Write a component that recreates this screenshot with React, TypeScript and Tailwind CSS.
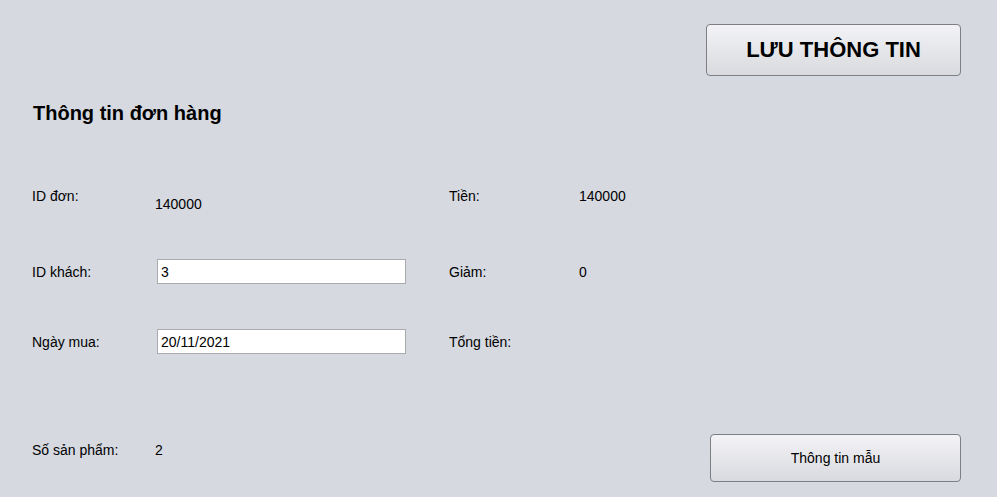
import React from "react";

export default function App() {
  return (
    <div className="w-[997px] h-[497px] bg-[#d6d9e0] font-['Liberation_Sans',Arial,sans-serif] text-[14px] leading-[16px] text-black flex flex-col overflow-hidden">
      <div className="flex justify-end pt-[24px] pr-[36px]">
        <button className="w-[255px] h-[52px] rounded-[4px] border border-[#7d7f84] bg-gradient-to-b from-[#f3f3f6] to-[#d9dadf] text-[22px] font-bold leading-none text-black">
          LƯU THÔNG TIN
        </button>
      </div>
      <h1 className="ml-[33px] mt-[26px] text-[20px] font-bold leading-[22px]">Thông tin đơn hàng</h1>

      <div className="mt-[64px] pl-[32px] grid grid-cols-[123px_294px_130px_1fr] h-[24px]">
        <div>ID đơn:</div>
        <div className="mt-[8px]">140000</div>
        <div>Tiền:</div>
        <div>140000</div>
      </div>

      <div className="mt-[47px] pl-[32px] grid grid-cols-[123px_294px_130px_1fr] h-[25px] items-center">
        <div>ID khách:</div>
        <div className="pl-[2px]">
          <div className="w-[249px] h-[25px] bg-white border border-[#a9abaf] pl-[3px] flex items-center">3</div>
        </div>
        <div>Giảm:</div>
        <div>0</div>
      </div>

      <div className="mt-[45px] pl-[32px] grid grid-cols-[123px_294px_130px_1fr] h-[25px] items-center">
        <div>Ngày mua:</div>
        <div className="pl-[2px]">
          <div className="w-[249px] h-[25px] bg-white border border-[#a9abaf] pl-[3px] flex items-center">20/11/2021</div>
        </div>
        <div>Tổng tiền:</div>
        <div></div>
      </div>

      <div className="mt-[80px] pl-[32px] pr-[36px] flex items-start">
        <div className="w-[123px] mt-[8px]">Số sản phẩm:</div>
        <div className="mt-[8px]">2</div>
        <button className="ml-auto w-[251px] h-[48px] rounded-[4px] border border-[#7d7f84] bg-gradient-to-b from-[#f3f3f6] to-[#d9dadf] text-[14px] text-black">
          Thông tin mẫu
        </button>
      </div>
    </div>
  );
}
